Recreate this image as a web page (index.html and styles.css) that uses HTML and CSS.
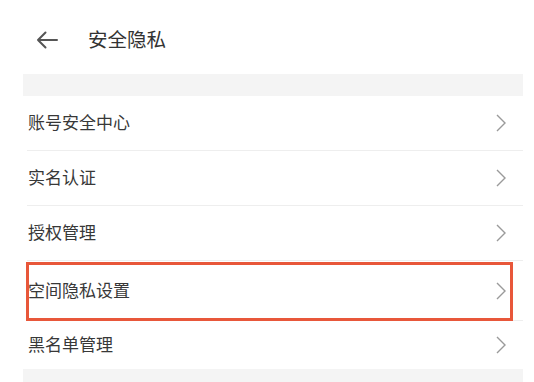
FILE: index.html
```html
<!DOCTYPE html>
<html lang="zh">
<head>
<meta charset="utf-8">
<link rel="stylesheet" href="styles.css">
</head>
<body>
<div class="page">
  <header class="topbar">
    <svg class="back" width="22" height="18" viewBox="0 0 22 18" aria-hidden="true">
      <path d="M21 9H2M9.5 1.5L2 9l7.5 7.5" fill="none" stroke="#555" stroke-width="2" stroke-linecap="round" stroke-linejoin="round"/>
    </svg>
    <h1 class="title">安全隐私</h1>
  </header>
  <main class="content">
    <div class="gap"></div>
    <ul class="list">
      <li class="row"><span class="label">账号安全中心</span><svg class="chev" width="10" height="18" viewBox="0 0 10 18"><path d="M1 1l8 8-8 8" fill="none" stroke="#9a9a9a" stroke-width="1.4"/></svg></li>
      <li class="row"><span class="label">实名认证</span><svg class="chev" width="10" height="18" viewBox="0 0 10 18"><path d="M1 1l8 8-8 8" fill="none" stroke="#9a9a9a" stroke-width="1.4"/></svg></li>
      <li class="row"><span class="label">授权管理</span><svg class="chev" width="10" height="18" viewBox="0 0 10 18"><path d="M1 1l8 8-8 8" fill="none" stroke="#9a9a9a" stroke-width="1.4"/></svg></li>
      <li class="row row-tall highlight"><span class="label">空间隐私设置</span><svg class="chev" width="10" height="18" viewBox="0 0 10 18"><path d="M1 1l8 8-8 8" fill="none" stroke="#9a9a9a" stroke-width="1.4"/></svg></li>
      <li class="row row-last"><span class="label">黑名单管理</span><svg class="chev" width="10" height="18" viewBox="0 0 10 18"><path d="M1 1l8 8-8 8" fill="none" stroke="#9a9a9a" stroke-width="1.4"/></svg></li>
    </ul>
    <div class="gap gap-bottom"></div>
  </main>
</div>
</body>
</html>
```
FILE: styles.css
```css
* { box-sizing: border-box; }
html, body {
  margin: 0;
  padding: 0;
  background: #ffffff;
}
body {
  font-family: "Noto Sans CJK SC", "Noto Sans", sans-serif;
  color: #333333;
}
.page {
  width: 534px;
  height: 382px;
  overflow: hidden;
}
.topbar {
  height: 74px;
  display: flex;
  align-items: center;
  padding-left: 36px;
  padding-top: 6px;
}
.back {
  display: block;
  flex: none;
  margin-top: -1px;
}
.title {
  margin: 0 0 0 30px;
  font-size: 19.5px;
  font-weight: 400;
  color: #333333;
  line-height: 1;
  position: relative;
  top: -1px;
}
.content {
  margin-left: 23px;
  width: 500px;
}
.gap {
  height: 22px;
  background: #f4f4f4;
}
.gap-bottom {
  height: 20px;
}
.list {
  list-style: none;
  margin: 0;
  padding: 0 0 0 4px;
}
.row {
  height: 55px;
  display: flex;
  align-items: center;
  justify-content: space-between;
  padding: 0 17px 0 1px;
  border-bottom: 1px solid #eeeeee;
  position: relative;
}
.label {
  font-size: 17px;
  line-height: 1;
  color: #383838;
  margin-bottom: 3px;
}
.row-tall {
  height: 60px;
}
.row-last {
  height: 48px;
  border-bottom: none;
}
.chev {
  display: block;
  flex: none;
}
.highlight::after {
  content: "";
  position: absolute;
  left: -1px;
  top: 1px;
  right: 10px;
  bottom: -1px;
  border: 3px solid #e8573a;
}
```
